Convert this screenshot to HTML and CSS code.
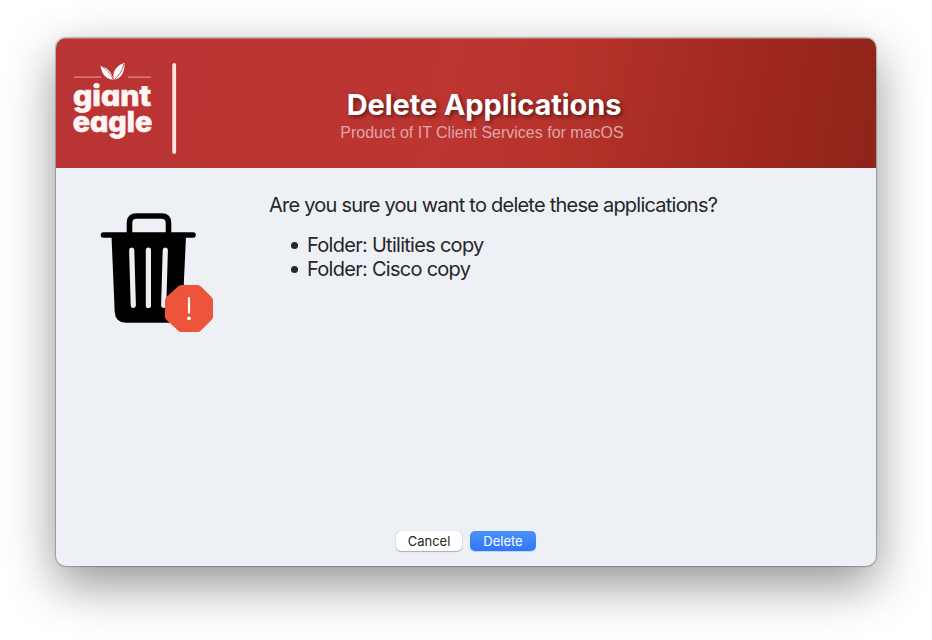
FILE: index.html
```
<!DOCTYPE html>
<html lang="en">
<head>
<meta charset="utf-8">
<title>Delete Applications</title>
<link rel="stylesheet" href="styles.css">
</head>
<body>
<main class="window">
  <header class="banner">
    <svg class="logo" width="130" height="130" viewBox="0 0 130 130" role="img" aria-label="giant eagle">
      <path d="M18 39.200H45M72 39.200H95" stroke="#f3c9c9" stroke-opacity=".6" stroke-width="1.200"/>
      <path d="M44.500 28C49 28.500 56 33 57 41.500C51 42 45.500 36 44.500 28Z" fill="#fff"/>
      <path d="M46 28.500C50 31 54 35 57 41" fill="none" stroke="#b93534" stroke-width=".7"/>
      <path d="M57.800 41.700C55.800 34 60.500 27 68.500 25C69 33 65.500 41 57.800 41.700Z" fill="#fff"/>
      <path d="M68 26C66.500 32 63 38 58.500 41.300" fill="none" stroke="#b93534" stroke-width=".8"/>
      <text class="logo-text" x="17" y="68.300" textLength="78" lengthAdjust="spacingAndGlyphs">giant</text>
      <text class="logo-text" x="16.700" y="94" textLength="79.500" lengthAdjust="spacingAndGlyphs">eagle</text>
      <rect x="116.300" y="25" width="3.800" height="91" rx="1.900" fill="#fae3e3"/>
    </svg>
    <div class="titles">
      <h1>Delete Applications</h1>
      <p>Product of IT Client Services for macOS</p>
    </div>
  </header>
  <section class="content">
    <svg class="trash" width="116" height="124" viewBox="0 0 116 124" aria-hidden="true">
      <path d="M29.500 27V15Q29.500 8 36.500 8H61.500Q68.500 8 68.500 15V27" fill="none" stroke="#000" stroke-width="5.600"/>
      <path d="M3.500 27H93" stroke="#000" stroke-width="5.600" stroke-linecap="round"/>
      <path d="M11.500 28H86L82.500 104Q81.500 114.700 71 114.700H26Q15.500 114.700 14.700 104Z"/>
      <path d="M31.700 42L33.300 97.500M48.400 42V97.500M65.300 42L63.700 97.500" stroke="#edf0f5" stroke-width="5.200" stroke-linecap="round"/>
      <path d="M81.500 77H97.500Q99.500 77 101 78.500L111.500 89Q113 90.500 113 92.500V108.500Q113 110.500 111.500 112L101 122.500Q99.500 124 97.500 124H81.500Q79.500 124 78 122.500L66.500 112Q65 110.500 65 108.500V92.500Q65 90.500 66.500 89L78 78.500Q79.500 77 81.500 77Z" fill="#ed553b"/>
      <path d="M89 90V104.500" stroke="#fff" stroke-width="2.200" stroke-linecap="round"/>
      <circle cx="89" cy="110.300" r="1.900" fill="#fff"/>
    </svg>
    <div class="message">
      <p>Are you sure you want to delete these applications?</p>
      <ul>
        <li>Folder: Utilities copy</li>
        <li>Folder: Cisco copy</li>
      </ul>
    </div>
  </section>
  <footer class="actions">
    <button class="cancel" type="button">Cancel</button>
    <button class="confirm" type="button">Delete</button>
  </footer>
</main>
</body>
</html>
```
FILE: styles.css
```
* { box-sizing: border-box; }
body {
  margin: 0;
  height: 640px;
  padding: 38px 56px;
  overflow: hidden;
  background: #fff;
  font-family: Inter, "Liberation Sans", sans-serif;
}
.window {
  display: flex;
  flex-direction: column;
  width: 820px;
  height: 528px;
  overflow: hidden;
  border-radius: 10px;
  background: #edf0f5;
  box-shadow: 0 0 1px 1px rgba(0, 0, 0, .25), 0 18px 50px rgba(0, 0, 0, .43);
}
.banner {
  display: flex;
  flex: none;
  height: 130px;
  background: linear-gradient(100deg, #b93434 0%, #bd3531 48%, #b7332c 61%, #9d271d 86%, #8f241a 100%);
  box-shadow: inset 0 1px rgba(255, 255, 255, .3);
}
.logo-text {
  fill: #fff5f5;
  stroke: #fff5f5;
  stroke-width: .7px;
  font: 800 29px Inter, sans-serif;
  font-feature-settings: "cv11";
}
.titles {
  flex: 1;
  padding: 49px 94px 0 0;
  text-align: center;
}
h1 {
  margin: 0;
  color: #fff;
  font-size: 29px;
  font-weight: 700;
  line-height: 36px;
  letter-spacing: -.1px;
  text-shadow: 2px 2px 4px rgba(0, 0, 0, .5);
}
.titles p {
  margin: 0;
  padding-right: 4px;
  color: #dda6aa;
  font: 16px/20px "Liberation Sans", sans-serif;
}
.content {
  display: flex;
  flex: 1;
  padding-left: 44px;
}
.trash { margin-top: 40px; }
.message {
  margin: 25px 0 0 53px;
  color: #252628;
  font-size: 20px;
  line-height: 24px;
  letter-spacing: -.77px;
  white-space: nowrap;
}
.message p { margin: 0; }
ul {
  margin: 16px 0 0;
  padding: 0;
  list-style: none;
  letter-spacing: -.72px;
}
li {
  display: flex;
  align-items: center;
}
li::before {
  content: "";
  width: 7px;
  height: 7px;
  margin: 0 9px 0 22px;
  border-radius: 50%;
  background: #252628;
}
.actions {
  display: flex;
  gap: 8px;
  padding: 0 0 15px 340px;
}
button {
  width: 66px;
  height: 20px;
  padding: 0;
  border: 0;
  border-radius: 5px;
  font: 13px/19px Inter, sans-serif;
}
.cancel {
  background: #fff;
  color: #252525;
  box-shadow: 0 0 1px rgba(0, 0, 0, .35), 0 1px 1px rgba(0, 0, 0, .25);
}
.confirm {
  background: linear-gradient(#4a91f9, #3176f7);
  color: #fff;
  box-shadow: 0 1px 1px rgba(0, 80, 220, .2);
}
```
